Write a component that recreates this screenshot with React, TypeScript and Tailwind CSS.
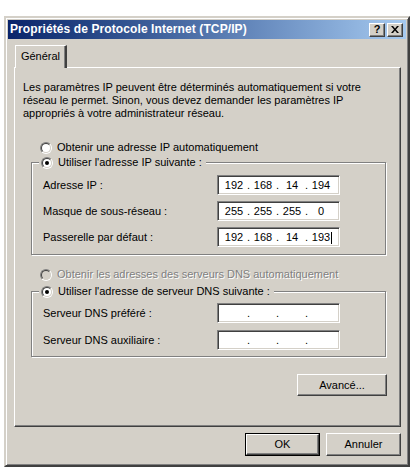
import React from 'react';

const raised =
  'border border-t-white border-l-white border-r-[#404040] border-b-[#404040] shadow-[inset_-1px_-1px_#808080]';
const sunken =
  'border border-t-[#808080] border-l-[#808080] border-b-white border-r-white shadow-[inset_1px_1px_#404040,inset_-1px_-1px_#d4d0c8]';

function Radio({ checked, disabled }: { checked?: boolean; disabled?: boolean }) {
  return (
    <span className="relative inline-block w-[12px] h-[12px] shrink-0">
      <span className="absolute inset-0 rounded-full border border-t-[#808080] border-l-[#808080] border-b-white border-r-white">
        <span
          className={`absolute inset-0 rounded-full border border-t-[#404040] border-l-[#404040] border-b-[#d4d0c8] border-r-[#d4d0c8] ${
            disabled ? 'bg-[#d4d0c8]' : 'bg-white'
          }`}
        />
      </span>
      {checked && <span className="absolute left-[4px] top-[4px] w-[4px] h-[4px] rounded-full bg-black" />}
    </span>
  );
}

function IpBox({ parts, cursor }: { parts?: string[]; cursor?: boolean }) {
  const p = parts ?? ['', '', '', ''];
  return (
    <div className={`w-[123px] h-[20px] bg-white flex items-center pl-[4px] ${sunken}`}>
      {p.map((v, i) => (
        <React.Fragment key={i}>
          <span className="w-[24px] text-center relative">
            {v}
            {cursor && i === 3 && <span className="absolute right-[1px] top-[1px] w-[1px] h-[12px] bg-black" />}
          </span>
          {i < 3 && <span className="w-[5px] text-center">.</span>}
        </React.Fragment>
      ))}
    </div>
  );
}

function Row({ label, parts, cursor }: { label: string; parts?: string[]; cursor?: boolean }) {
  return (
    <div className="flex items-center h-[20px]">
      <span className="w-[174px]">{label}</span>
      <IpBox parts={parts} cursor={cursor} />
    </div>
  );
}

function Group({ legend, children }: { legend: string; children: React.ReactNode }) {
  return (
    <div className="relative ml-[8px] w-[355px] border border-[#808080] shadow-[inset_1px_1px_#fff,1px_1px_#fff]">
      <div className="absolute left-[7px] -top-[7px] flex items-center gap-[5px] bg-[#d4d0c8] pl-[2px] pr-[4px] h-[13px]">
        <Radio checked />
        <span>{legend}</span>
      </div>
      {children}
    </div>
  );
}

export default function App() {
  return (
    <div className="w-[420px] h-[473px] bg-white pt-[16px] pl-[4px] font-['Liberation_Sans',Arial,sans-serif] text-[11px] leading-[13px] text-black">
      <div className="w-[406px] h-[451px] bg-[#d4d0c8] border-2 border-t-[#d4d0c8] border-l-[#d4d0c8] border-r-[#404040] border-b-[#404040] shadow-[inset_1px_1px_#fff,inset_-1px_-1px_#808080] p-[2px]">
        {/* title bar */}
        <div className="h-[19px] flex items-center pl-[2px] pr-[3px] bg-gradient-to-r from-[#0a246a] to-[#a6caf0]">
          <span className="text-white font-bold text-[12px] tracking-[0.1px]">Propriétés de Protocole Internet (TCP/IP)</span>
          <div className="ml-auto flex gap-[2px]">
            <div className={`w-[16px] h-[14px] bg-[#d4d0c8] flex items-center justify-center font-bold text-[11px] leading-none ${raised}`}>?</div>
            <div className={`w-[16px] h-[14px] bg-[#d4d0c8] flex items-center justify-center ${raised}`}>
              <svg width="8" height="7" viewBox="0 0 8 7">
                <path d="M0 0h2l2 2.5L6 0h2L5 3.5 8 7H6L4 4.5 2 7H0l3-3.5z" fill="#000" />
              </svg>
            </div>
          </div>
        </div>

        {/* tab */}
        <div className="mt-[6px] ml-[7px] flex">
          <div className="relative z-10 -mb-[1px] h-[23px] w-[52px] bg-[#d4d0c8] border-t border-l border-t-white border-l-white border-r-2 border-r-[#404040] shadow-[inset_-1px_0_#808080] flex items-center justify-center pb-[2px]">
            Général
          </div>
        </div>

        {/* panel */}
        <div className="ml-[6px] w-[387px] h-[360px] border border-t-white border-l-white border-r-[#404040] border-b-[#404040] shadow-[inset_-1px_-1px_#808080] pt-[13px] pl-[8px]">
          <p className="w-[360px]">
            Les paramètres IP peuvent être déterminés automatiquement si votre réseau le permet. Sinon, vous devez demander les paramètres IP appropriés à votre administrateur réseau.
          </p>

          <div className="mt-[21px] ml-[17px] flex items-center gap-[5px] h-[13px]">
            <Radio />
            <span>Obtenir une adresse IP automatiquement</span>
          </div>

          <div className="mt-[8px]">
            <Group legend="Utiliser l'adresse IP suivante :">
              <div className="pl-[11px] pt-[12px] pb-[7px] flex flex-col gap-[6px]">
                <Row label="Adresse IP :" parts={['192', '168', '14', '194']} />
                <Row label="Masque de sous-réseau :" parts={['255', '255', '255', '0']} />
                <Row label="Passerelle par défaut :" parts={['192', '168', '14', '193']} cursor />
              </div>
            </Group>
          </div>

          <div className="mt-[13px] ml-[17px] flex items-center gap-[5px] h-[13px] text-[#808080]">
            <Radio disabled />
            <span className="[text-shadow:1px_1px_#fff]">Obtenir les adresses des serveurs DNS automatiquement</span>
          </div>

          <div className="mt-[10px]">
            <Group legend="Utiliser l'adresse de serveur DNS suivante :">
              <div className="pl-[11px] pt-[11px] pb-[6px] flex flex-col gap-[7px]">
                <Row label="Serveur DNS préféré :" />
                <Row label="Serveur DNS auxiliaire :" />
              </div>
            </Group>
          </div>

          <div className="mt-[17px] w-[364px] flex justify-end">
            <div className={`w-[90px] h-[22px] flex items-center justify-center ${raised}`}>Avancé...</div>
          </div>
        </div>

        {/* dialog buttons */}
        <div className="mt-[6px] w-[393px] flex justify-end gap-[6px]">
          <div className="w-[75px] h-[23px] border border-black">
            <div className={`w-full h-full flex items-center justify-center ${raised}`}>OK</div>
          </div>
          <div className={`w-[75px] h-[23px] flex items-center justify-center ${raised}`}>Annuler</div>
        </div>
      </div>
    </div>
  );
}
